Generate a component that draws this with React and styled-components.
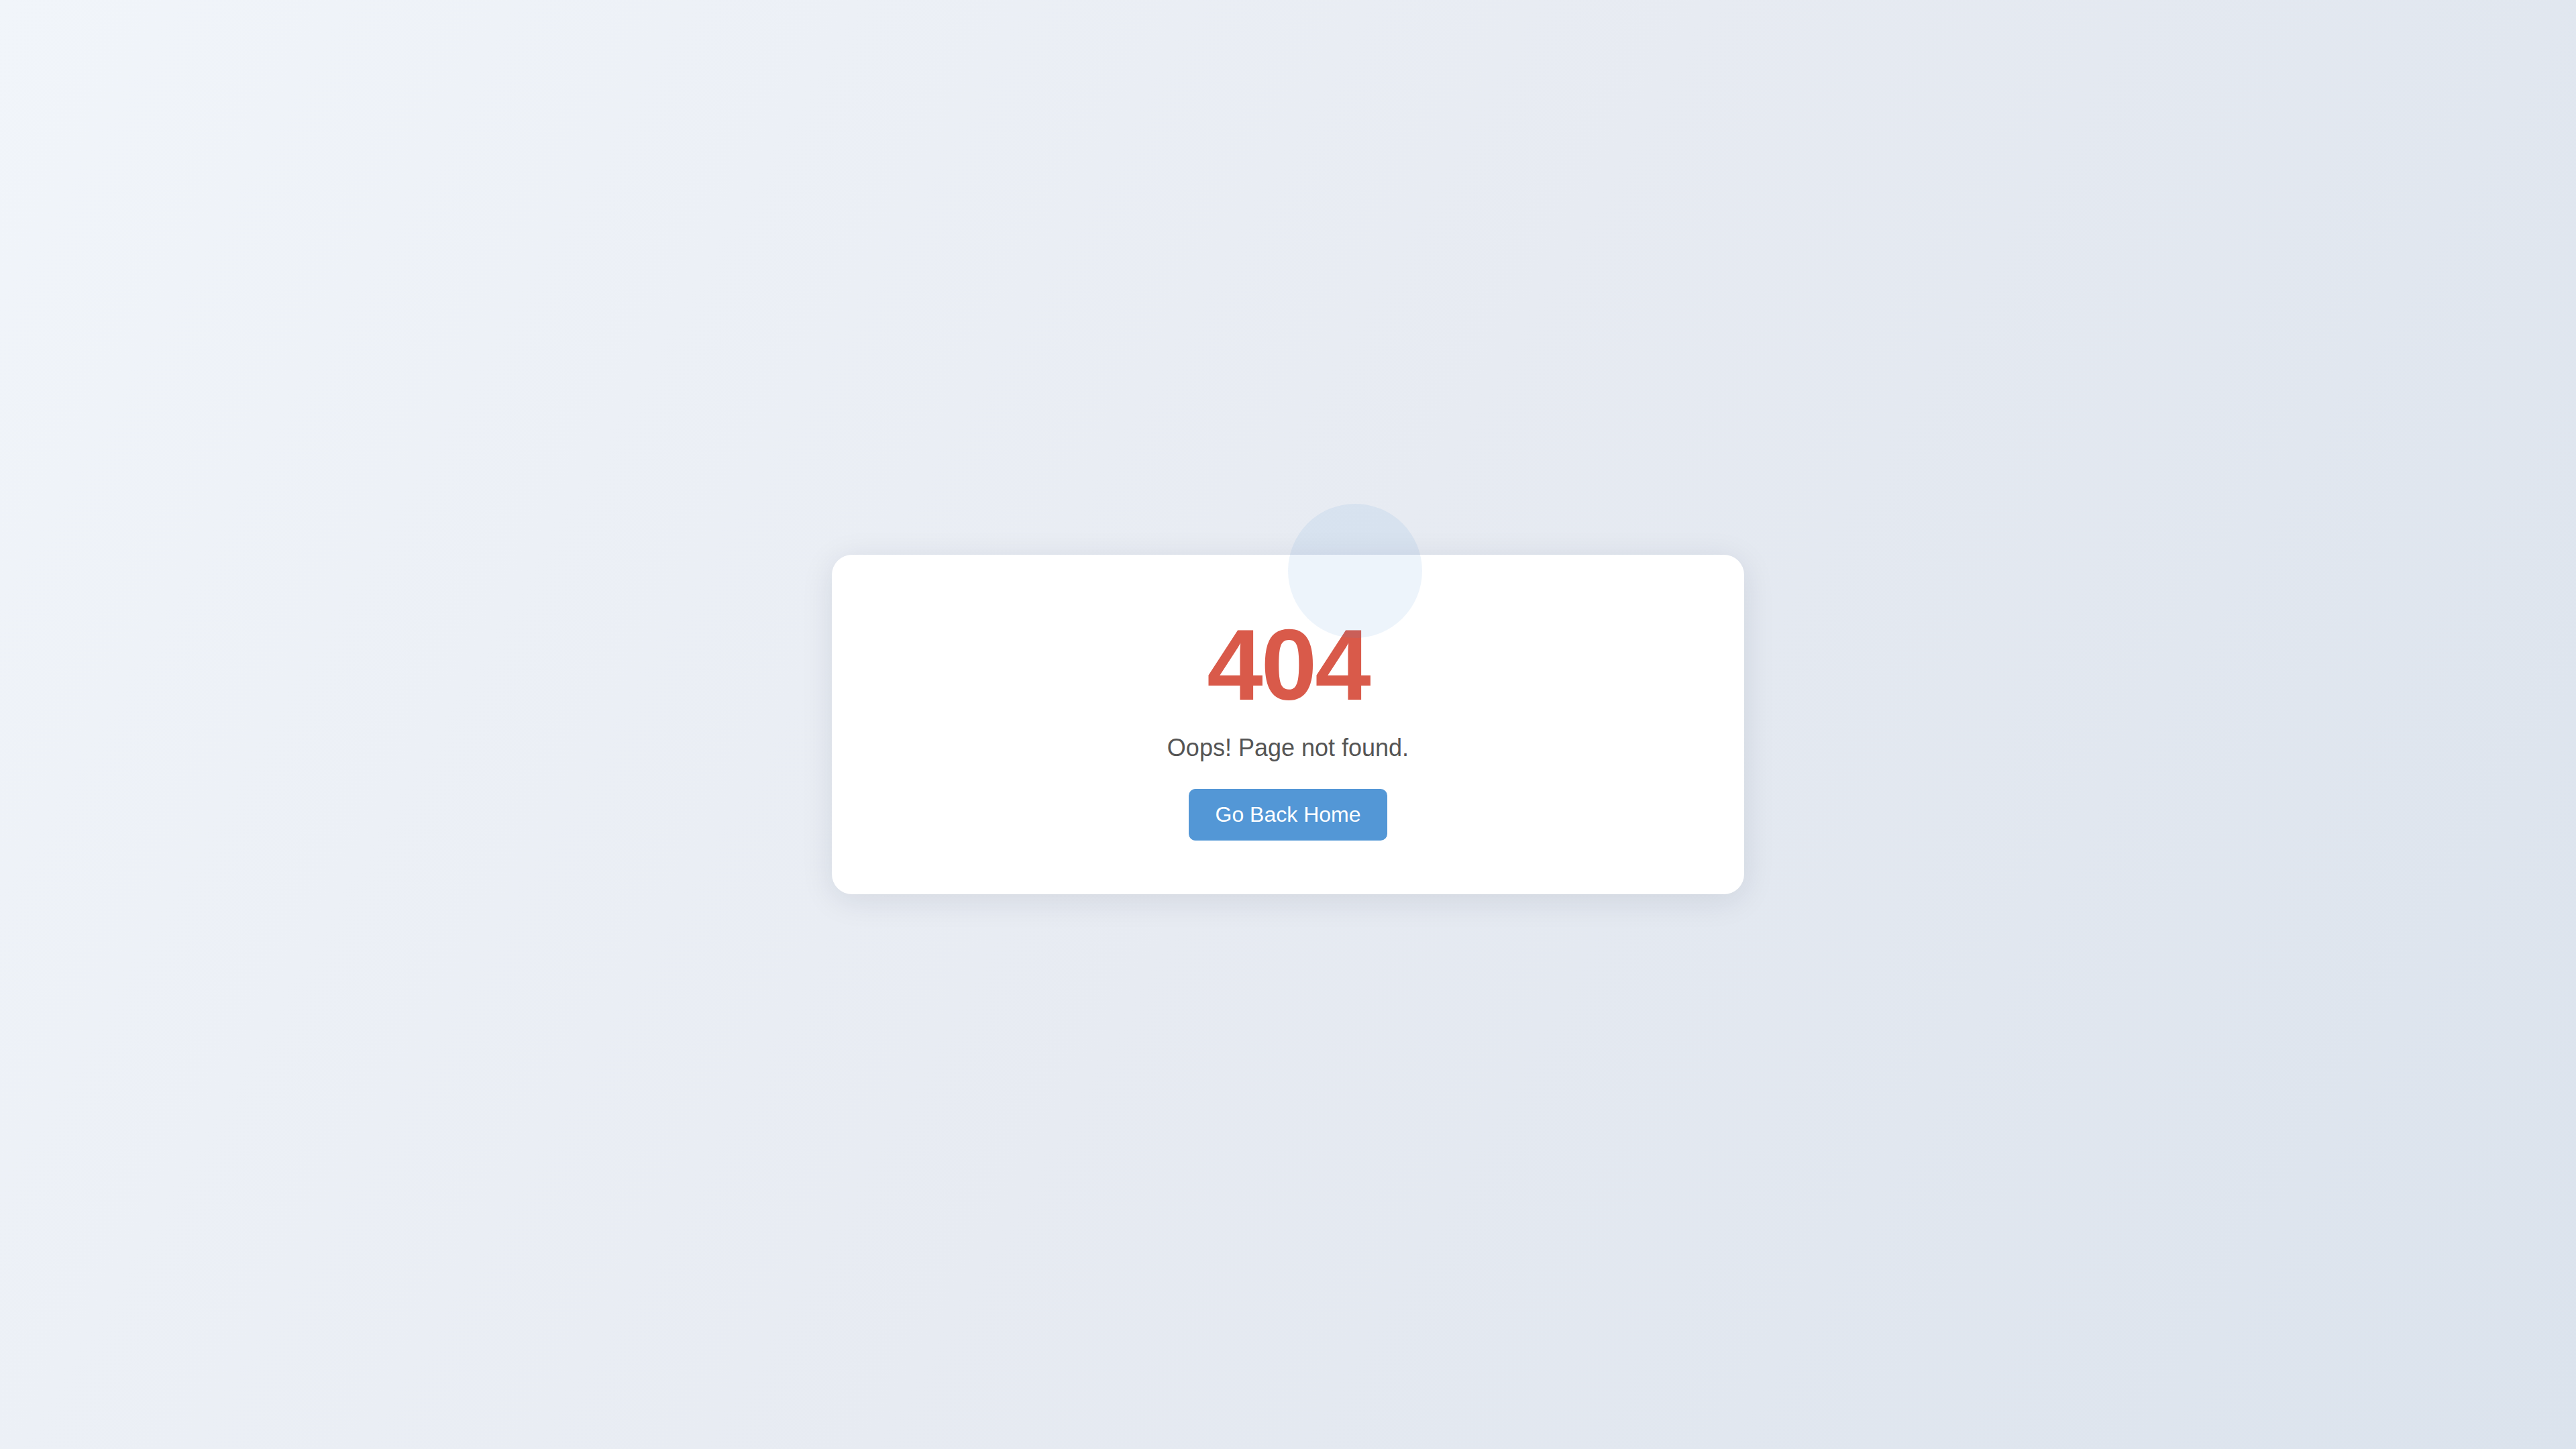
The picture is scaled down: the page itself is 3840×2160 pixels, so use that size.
import React from "react";
import styled, { createGlobalStyle } from "styled-components";

const GlobalStyle = createGlobalStyle`
  html, body {
    margin: 0;
    padding: 0;
  }
  body {
    font-family: "Liberation Sans", Arial, sans-serif;
  }
  * { box-sizing: border-box; }
`;

const Page = styled.main`
  min-height: 100vh;
  display: flex;
  align-items: center;
  justify-content: center;
  background: linear-gradient(120deg, #f1f5fa 0%, #e7ebf2 50%, #dbe3ed 100%);
`;

const Card = styled.section`
  position: relative;
  width: 1360px;
  padding: 78px 80px 80px;
  background: #ffffff;
  border-radius: 30px;
  box-shadow: 0 8px 48px rgba(20, 30, 60, 0.1);
  display: flex;
  flex-direction: column;
  align-items: center;
  text-align: center;
`;

const Bubble = styled.div`
  position: absolute;
  top: -76px;
  left: 50%;
  width: 200px;
  height: 200px;
  border-radius: 50%;
  background: rgba(74, 144, 217, 0.1);
  z-index: 1;
  pointer-events: none;
`;

const Code = styled.h1`
  margin: 0;
  font-family: "Liberation Sans", Arial, sans-serif;
  font-size: 150px;
  font-weight: 700;
  line-height: normal;
  letter-spacing: -3px;
  color: #d95a4a;
`;

const Message = styled.p`
  margin: 16px 0 40px;
  font-size: 36px;
  line-height: normal;
  color: #555555;
`;

const HomeButton = styled.a`
  display: inline-block;
  padding: 20px 40px;
  font-family: "Liberation Sans", Arial, sans-serif;
  font-size: 32px;
  line-height: normal;
  color: #ffffff;
  background: #5397d6;
  border-radius: 10px;
  text-decoration: none;
  cursor: pointer;
`;

export default function App() {
  return (
    <>
      <GlobalStyle />
      <Page>
        <Card>
          <Bubble />
          <Code>404</Code>
          <Message>Oops! Page not found.</Message>
          <HomeButton href="#">Go Back Home</HomeButton>
        </Card>
      </Page>
    </>
  );
}
